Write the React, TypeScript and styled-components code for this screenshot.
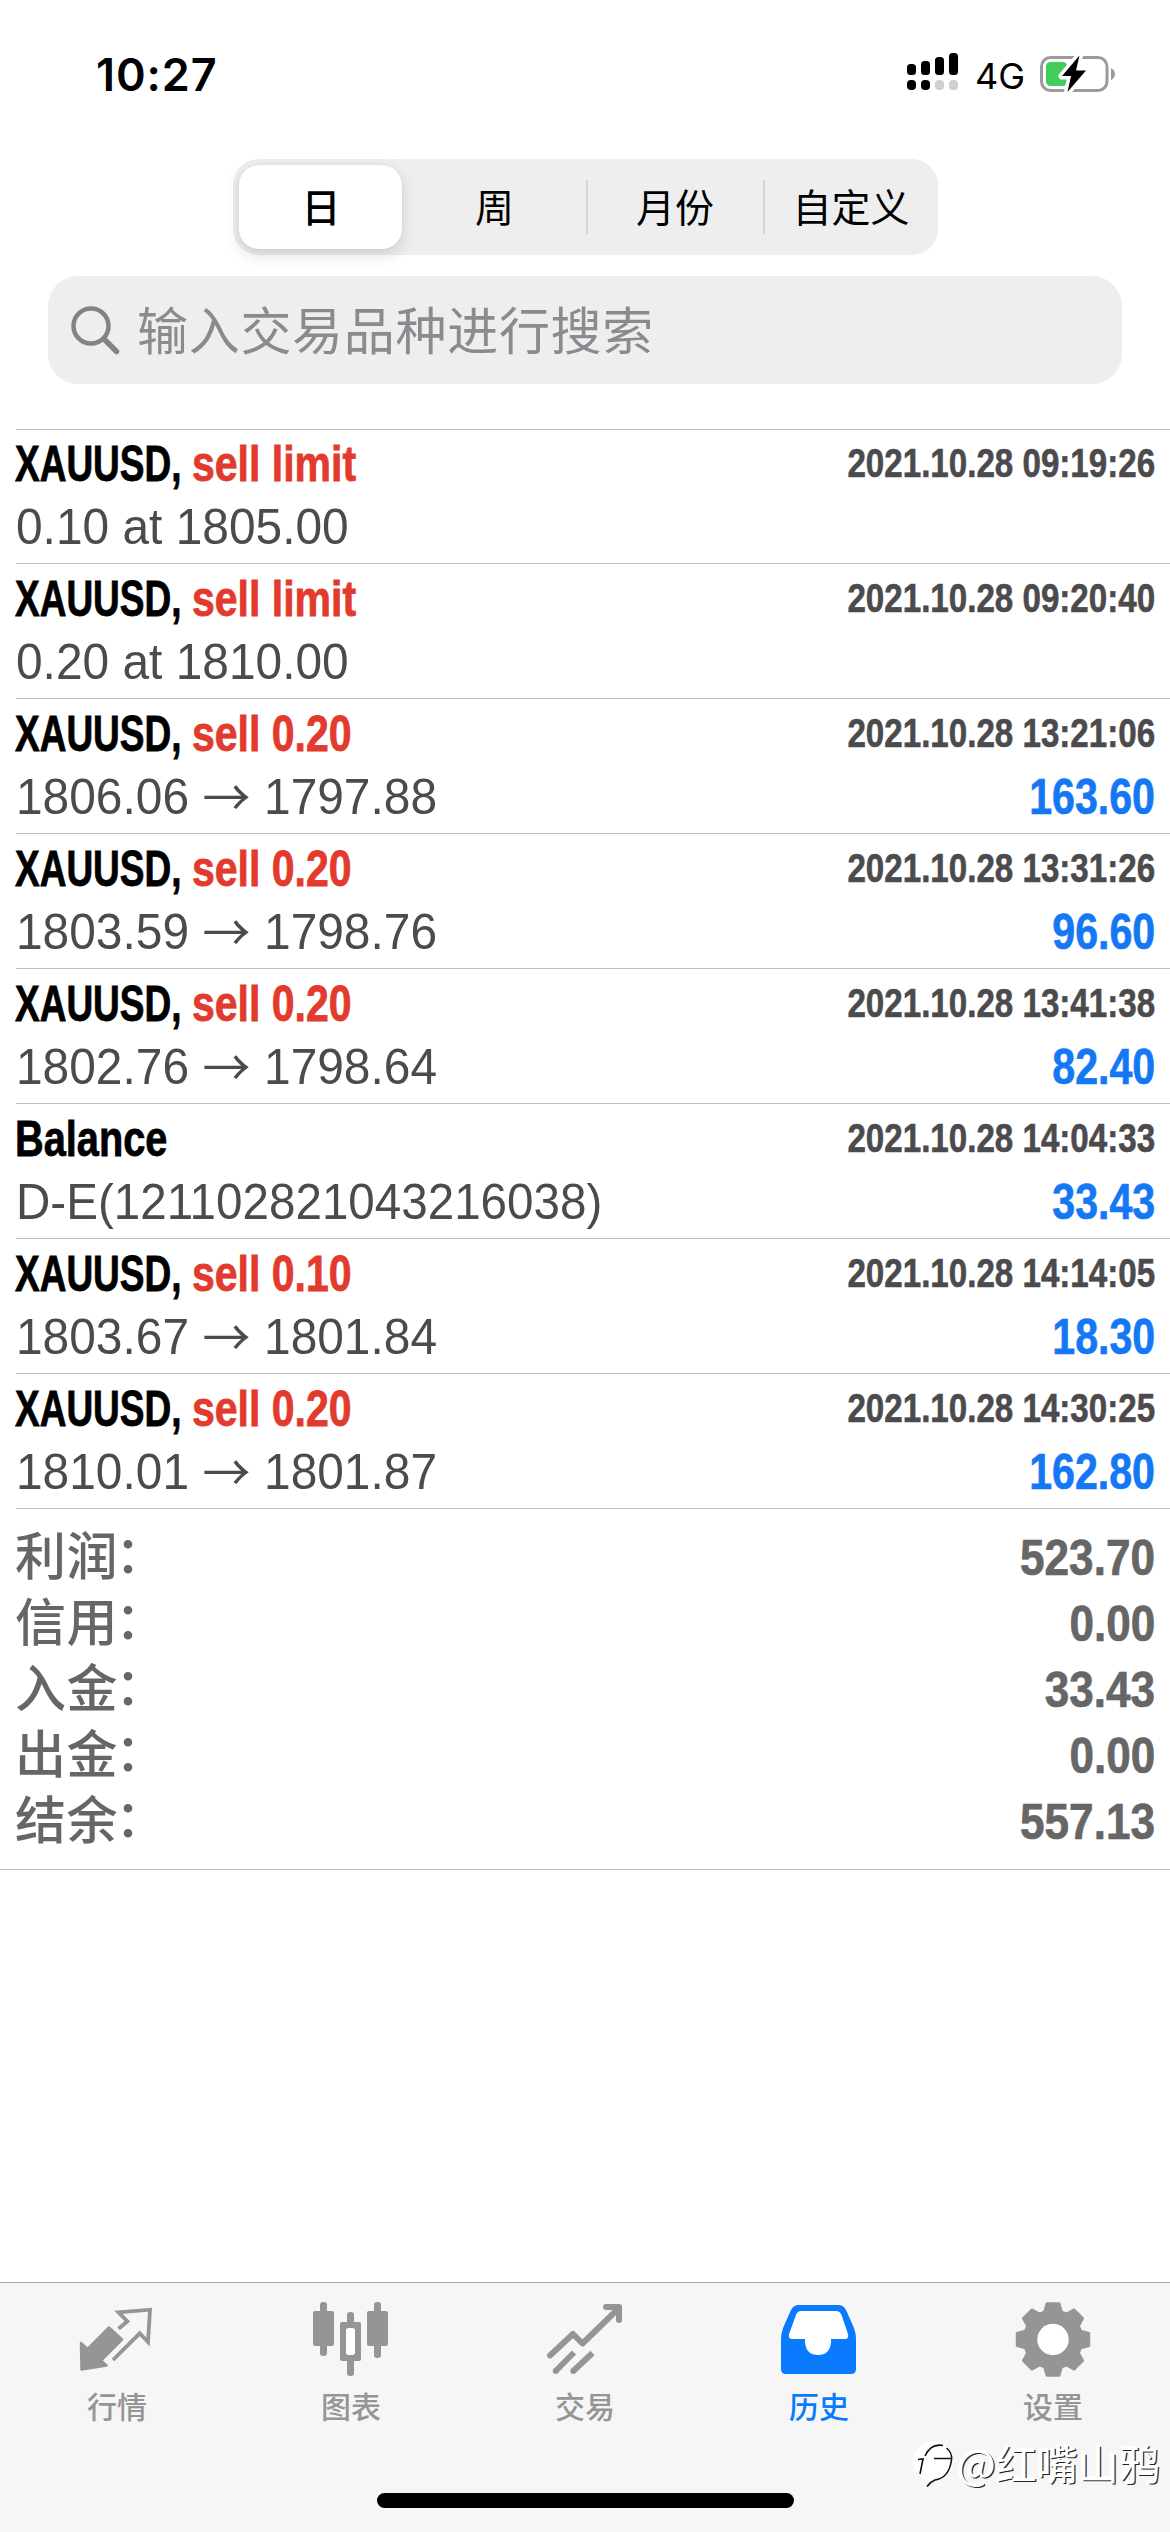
import React from "react";
import styled, { createGlobalStyle } from "styled-components";

const latin = `"Liberation Sans", Arial, "Noto Sans CJK SC", sans-serif`;
const cjk = `"Noto Sans CJK SC", sans-serif`;
const system = `Inter, "Noto Sans CJK SC", sans-serif`;

const Global = createGlobalStyle`
  * { box-sizing: border-box; }
  body { margin: 0; background: #fff; }
`;

const Screen = styled.div`
  width: 1170px;
  height: 2532px;
  display: flex;
  flex-direction: column;
  background: #fff;
  overflow: hidden;
  position: relative;
  font-family: ${latin};
`;

const StatusBar = styled.header`
  height: 159px;
  flex: none;
  padding: 47px 54px 0 96px;
  display: flex;
  justify-content: space-between;
  align-items: flex-start;
  font-family: ${system};
  color: #000;
`;

const Clock = styled.time`
  font-size: 45px;
  line-height: 55px;
  font-weight: 600;
  letter-spacing: 0.9px;
`;

const StatusIcons = styled.div`
  display: flex;
  align-items: flex-start;
  padding-top: 2px;
  height: 55px;
`;

const Network = styled.span`
  font-size: 36px;
  line-height: 55px;
  width: 81px;
  padding-left: 16px;
`;

const Segmented = styled.nav`
  width: 705px;
  height: 96px;
  flex: none;
  align-self: center;
  padding: 6px 0 6px 6px;
  border-radius: 26px;
  background: #eeeeef;
  display: grid;
  grid-template-columns: 163px 184px 177px 1fr;
`;

const Segment = styled.button<{ $active?: boolean; $divided?: boolean }>`
  border: 0;
  padding: 0 0 4px 2px;
  margin: 0;
  font-family: ${cjk};
  font-size: 39px;
  line-height: 1;
  font-weight: ${(p) => (p.$active ? 500 : 400)};
  color: #000;
  border-radius: ${(p) => (p.$active ? "20px" : "0")};
  background: ${(p) =>
    p.$active
      ? "#fff"
      : p.$divided
        ? "linear-gradient(#d4d4d6, #d4d4d6) left center / 2px 54px no-repeat"
        : "transparent"};
  box-shadow: ${(p) => (p.$active ? "0 6px 16px rgba(0, 0, 0, 0.13), 0 0 2px rgba(0, 0, 0, 0.08)" : "none")};
`;

const SearchField = styled.div`
  height: 108px;
  flex: none;
  margin: 21px 48px 45px;
  border-radius: 30px;
  background: #eeeeef;
  padding-left: 22px;
  display: flex;
  align-items: center;
  gap: 17px;
  color: #8b8b8f;
  font-family: ${cjk};
  font-size: 51px;
  letter-spacing: 0.7px;
  line-height: 104px;
`;

const SearchText = styled.span`
  height: 108px;
`;

const History = styled.main`
  flex: none;
  margin-left: 16px;
  border-top: 1px solid #bfbfc2;
`;

const Deal = styled.article`
  height: 135px;
  border-bottom: 1px solid #bfbfc2;
  padding: 3px 15px 0 0;
  &:first-child { height: 134px; padding-top: 2px; }
`;

const Line = styled.div<{ $h: number }>`
  height: ${(p) => p.$h}px;
  line-height: ${(p) => p.$h}px;
  display: flex;
  justify-content: space-between;
  white-space: nowrap;
`;

const Title = styled.div`
  display: flex;
  font-size: 50px;
  font-weight: 700;
  margin-left: -1px;
  -webkit-text-stroke: 0.8px currentColor;
`;

const Condensed = styled.span<{ $x: number; $w?: number; $color?: string; $right?: boolean }>`
  display: block;
  width: ${(p) => (p.$w ? `${p.$w}px` : "auto")};
  color: ${(p) => p.$color ?? "#000"};
  transform: scaleX(${(p) => p.$x});
  transform-origin: ${(p) => (p.$right ? "right" : "left")} center;
`;

const Stamp = styled(Condensed)`
  font-size: 40.5px;
  font-weight: 700;
  line-height: 62px;
  -webkit-text-stroke: 0.6px currentColor;
`;

const Amount = styled(Condensed)`
  font-size: 50px;
  font-weight: 700;
  -webkit-text-stroke: 0.7px currentColor;
`;

const Detail = styled(Condensed)`
  font-size: 49.5px;
`;

const Arrow = styled.span`
  display: inline-block;
  width: 50px;
  text-align: center;
  font-family: "Noto Sans CJK SC", sans-serif;
  font-weight: 400;
  line-height: 50px;
  vertical-align: -2px;
`;

const Summary = styled.section`
  flex: none;
  height: 361px;
  padding: 16px 15px 0 15px;
  border-bottom: 1px solid #bfbfc2;
`;

const SummaryLabel = styled.span`
  font-size: 51px;
  letter-spacing: 0.6px;
  font-weight: 500;
  color: #666;
`;

const Colon = styled.span`
  margin-left: -3px;
  vertical-align: 2px;
  line-height: 1;
`;

const TabBar = styled.footer`
  margin-top: auto;
  height: 250px;
  flex: none;
  border-top: 1px solid #acacac;
  background: #f6f6f6;
  display: grid;
  grid-template-columns: repeat(5, 1fr);
  align-items: start;
`;

const Tab = styled.div<{ $active?: boolean }>`
  display: flex;
  flex-direction: column;
  align-items: center;
  padding-top: 17px;
  color: ${(p) => (p.$active ? "#0a7aff" : "#959595")};
  font-family: ${cjk};
  font-size: 30px;
  line-height: 46px;
  font-weight: 500;
`;

const TabIcon = styled.svg`
  display: block;
  width: 80px;
  height: 80px;
  margin-bottom: 2px;
`;

const HomeIndicator = styled.div`
  position: absolute;
  left: 377px;
  bottom: 24px;
  width: 417px;
  height: 15px;
  border-radius: 8px;
  background: #000;
`;

const Watermark = styled.div`
  position: absolute;
  left: 913px;
  top: 2432px;
  display: flex;
  align-items: center;
  font-family: ${cjk};
  font-size: 41px;
  line-height: 60px;
  color: #fff;
  white-space: nowrap;
  text-shadow: 1.2px 1.2px 0 #222, -1px -1px 0 #fff;
`;

type Row = { kind?: string; time: string; from: string; to?: string; value?: string };

const rows: Row[] = [
  { kind: "sell limit", time: "2021.10.28 09:19:26", from: "0.10 at 1805.00" },
  { kind: "sell limit", time: "2021.10.28 09:20:40", from: "0.20 at 1810.00" },
  { kind: "sell 0.20", time: "2021.10.28 13:21:06", from: "1806.06", to: "1797.88", value: "163.60" },
  { kind: "sell 0.20", time: "2021.10.28 13:31:26", from: "1803.59", to: "1798.76", value: "96.60" },
  { kind: "sell 0.20", time: "2021.10.28 13:41:38", from: "1802.76", to: "1798.64", value: "82.40" },
  { time: "2021.10.28 14:04:33", from: "D-E(121102821043216038)", value: "33.43" },
  { kind: "sell 0.10", time: "2021.10.28 14:14:05", from: "1803.67", to: "1801.84", value: "18.30" },
  { kind: "sell 0.20", time: "2021.10.28 14:30:25", from: "1810.01", to: "1801.87", value: "162.80" },
];

const totals = [
  ["利润", "523.70"],
  ["信用", "0.00"],
  ["入金", "33.43"],
  ["出金", "0.00"],
  ["结余", "557.13"],
];

const Signal = () => (
  <svg width="52" height="48" viewBox="907 52 52 48">
    <g fill="#000">
      <rect x="907" y="67" width="9" height="11" rx="3.5" />
      <rect x="921" y="64" width="9" height="14" rx="3.5" />
      <rect x="935" y="60" width="9" height="18" rx="3.5" />
      <rect x="949" y="56" width="9" height="22" rx="3.5" />
      <rect x="907" y="83" width="9" height="10" rx="4" />
      <rect x="921" y="83" width="9" height="10" rx="4" />
    </g>
    <g fill="#cfcfcf">
      <rect x="935" y="83" width="9" height="10" rx="4" />
      <rect x="949" y="83" width="9" height="10" rx="4" />
    </g>
  </svg>
);

const Battery = () => (
  <svg width="76" height="48" viewBox="1040 49 76 48">
    <rect x="1041.5" y="57.5" width="65.5" height="33" rx="9" fill="none" stroke="#9b9b9f" strokeWidth="3" />
    <rect x="1046" y="62" width="21" height="24" rx="4.5" fill="#42cc5b" />
    <path d="M1111 68 q4 2 4 6 t-4 6z" fill="#9b9b9f" />
    <path
      d="M1079.5 55.5 L1062 76 H1071 L1067.5 92 L1086 70.500 H1076z"
      fill="#000"
      stroke="#fff"
      strokeWidth="7"
      strokeLinejoin="round"
      paintOrder="stroke"
    />
  </svg>
);

const gearPoints = () => {
  const out: string[] = [];
  for (let i = 0; i < 8; i++) {
    const base = (i * Math.PI) / 4;
    for (const [r, a] of [[29, -0.3], [36.5, -0.17], [36.5, 0.17], [29, 0.3]]) {
      out.push(`${(r * Math.sin(base + a)).toFixed(2)},${(-r * Math.cos(base + a)).toFixed(2)}`);
    }
  }
  return out.join(" ");
};

const QuotesIcon = () => (
  <TabIcon viewBox="77 2300 80 80">
    <path
      d="M81 2343 L87.600 2349 L109 2327.500 L122 2339.500 L101 2360.500 L106.500 2365.500 L81.500 2369.500z"
      fill="currentColor" stroke="currentColor" strokeWidth="2.500" strokeLinejoin="round"
    />
    <path
      d="M118.600 2328.700 L127.400 2321.300 L118.500 2312.300 L150 2309.700 L148 2342 L139.700 2333.300 L113 2360"
      fill="none" stroke="currentColor" strokeWidth="3.800"
    />
  </TabIcon>
);

const ChartIcon = () => (
  <TabIcon viewBox="311 2300 80 80">
    <g fill="currentColor">
      <rect x="313" y="2311" width="21" height="35" rx="2" />
      <rect x="320" y="2302" width="7" height="54" rx="3" />
      <rect x="367" y="2311" width="21" height="35" rx="2" />
      <rect x="374" y="2302" width="7" height="56" rx="3" />
      <rect x="340" y="2322" width="21" height="39" rx="2" />
      <rect x="347" y="2312" width="7" height="64" rx="3" />
    </g>
    <rect x="346" y="2328" width="9" height="27" rx="2.500" fill="#fff" />
  </TabIcon>
);

const TradeIcon = () => (
  <TabIcon viewBox="545 2300 80 80">
    <g fill="none" stroke="currentColor" strokeWidth="6" strokeLinecap="round" strokeLinejoin="round">
      <path d="M550 2355.500 L573 2334 L582.500 2343.500 L619 2308" />
      <path d="M606 2307 H619 V2320" />
    </g>
    <g fill="none" stroke="currentColor" strokeWidth="6">
      <path d="M555.700 2371 L574 2352.500 M573.300 2371 L592.500 2353" />
    </g>
    <circle cx="555.700" cy="2371" r="3" fill="currentColor" />
    <circle cx="573.300" cy="2371" r="3" fill="currentColor" />
  </TabIcon>
);

const HistoryIcon = () => (
  <TabIcon viewBox="779 2300 80 80">
    <path d="M798 2305 H839 Q844 2305 846.500 2311 L854 2328 Q856 2334 856 2339 V2369 Q856 2374 851 2374 H786 Q781 2374 781 2369 V2339 Q781 2334 783 2328 L790.500 2311 Q793 2305 798 2305z" fill="currentColor" />
    <path d="M801 2311 H836 Q840 2311 841.500 2315 L848 2334 Q849 2339 845 2339 H831 V2342 Q830 2355 818 2355 Q806 2355 805 2342 V2339 H792 Q788 2339 789 2334 L796 2315 Q797.500 2311 801 2311z" fill="#fff" />
  </TabIcon>
);

const SettingsIcon = () => (
  <TabIcon viewBox="-40 -39.500 80 80">
    <polygon points={gearPoints()} fill="currentColor" stroke="currentColor" strokeWidth="2.500" strokeLinejoin="round" />
    <circle r="15.700" fill="#fff" />
  </TabIcon>
);

const tabs = [
  { label: "行情", Icon: QuotesIcon },
  { label: "图表", Icon: ChartIcon },
  { label: "交易", Icon: TradeIcon },
  { label: "历史", Icon: HistoryIcon, active: true },
  { label: "设置", Icon: SettingsIcon },
];

export default function App() {
  return (
    <Screen>
      <Global />
      <StatusBar>
        <Clock>10:27</Clock>
        <StatusIcons>
          <Signal />
          <Network>4G</Network>
          <Battery />
        </StatusIcons>
      </StatusBar>

      <Segmented>
        <Segment $active>日</Segment>
        <Segment>周</Segment>
        <Segment $divided>月份</Segment>
        <Segment $divided>自定义</Segment>
      </Segmented>

      <SearchField>
        <svg width="50" height="50" viewBox="0 0 50 50" fill="none" stroke="#838387" strokeWidth="4.5" strokeLinecap="round">
          <circle cx="21" cy="21" r="17.500" />
          <path d="M34 34 L46.500 46.500" strokeWidth="5.5" />
        </svg>
        <SearchText>输入交易品种进行搜索</SearchText>
      </SearchField>

      <History>
        {rows.map((r) => (
          <Deal key={r.time}>
            <Line $h={64}>
              <Title>
                {r.kind ? (
                  <>
                    <Condensed $x={0.74} $w={177}>XAUUSD,</Condensed>
                    <Condensed $x={0.82} $color="#e23b2e">{r.kind}</Condensed>
                  </>
                ) : (
                  <Condensed $x={0.795}>Balance</Condensed>
                )}
              </Title>
              <Stamp $x={0.818} $right $color="#4b4b4d">{r.time}</Stamp>
            </Line>
            <Line $h={62}>
              <Detail $x={r.kind ? 0.967 : 0.961} $color="#4b4b4d">
                {r.from}
                {r.to && (
                  <>
                    {" "}<Arrow>→</Arrow>{" "}{r.to}
                  </>
                )}
              </Detail>
              {r.value && <Amount $x={0.822} $right $color="#1478f5">{r.value}</Amount>}
            </Line>
          </Deal>
        ))}
      </History>

      <Summary>
        {totals.map(([label, value]) => (
          <Line $h={66} key={label}>
            <SummaryLabel>{label}<Colon>：</Colon></SummaryLabel>
            <Amount $x={0.882} $right $color="#666">{value}</Amount>
          </Line>
        ))}
      </Summary>

      <TabBar>
        {tabs.map(({ label, Icon, active }) => (
          <Tab key={label} $active={active}>
            <Icon />
            {label}
          </Tab>
        ))}
      </TabBar>
      <HomeIndicator />
      <Watermark>
        <svg width="44" height="52" viewBox="913 2441 44 52">
          <circle cx="933" cy="2466" r="20" fill="#fff" />
          <path
            d="M920 2479 L923 2464 L918 2464.500 M925 2461 Q931 2448 943 2450.500 M934 2463.500 H952"
            fill="none" stroke="#111" strokeWidth="1.600"
          />
          <path
            d="M946.500 2453 Q952.500 2458 951.500 2465 Q949 2483 935 2485 Q930 2487 927 2491.500"
            fill="none" stroke="#111" strokeWidth="1.600"
          />
        </svg>
        @红嘴山鸦
      </Watermark>
    </Screen>
  );
}
